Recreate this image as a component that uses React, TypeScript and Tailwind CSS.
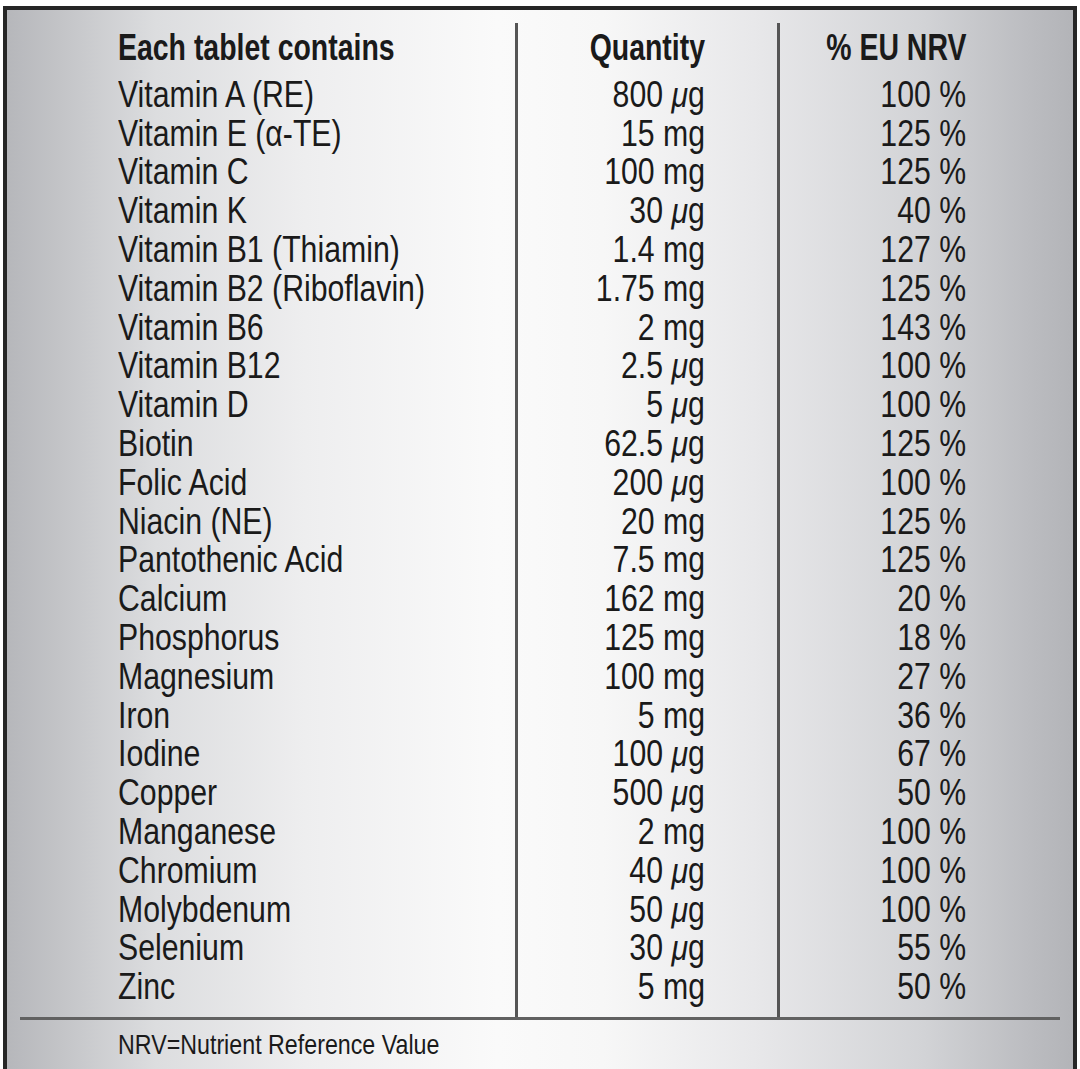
import React from "react";

type Row = { name: React.ReactNode; qty: React.ReactNode; nrv: string };

const mu = (n: string) => (
  <>
    {n} <span className="italic">μ</span>g
  </>
);

const rows: Row[] = [
  { name: "Vitamin A (RE)", qty: mu("800"), nrv: "100 %" },
  { name: "Vitamin E (α-TE)", qty: "15 mg", nrv: "125 %" },
  { name: "Vitamin C", qty: "100 mg", nrv: "125 %" },
  { name: "Vitamin K", qty: mu("30"), nrv: "40 %" },
  { name: "Vitamin B1 (Thiamin)", qty: "1.4 mg", nrv: "127 %" },
  { name: "Vitamin B2 (Riboflavin)", qty: "1.75 mg", nrv: "125 %" },
  { name: "Vitamin B6", qty: "2 mg", nrv: "143 %" },
  { name: "Vitamin B12", qty: mu("2.5"), nrv: "100 %" },
  { name: "Vitamin D", qty: mu("5"), nrv: "100 %" },
  { name: "Biotin", qty: mu("62.5"), nrv: "125 %" },
  { name: "Folic Acid", qty: mu("200"), nrv: "100 %" },
  { name: "Niacin (NE)", qty: "20 mg", nrv: "125 %" },
  { name: "Pantothenic Acid", qty: "7.5 mg", nrv: "125 %" },
  { name: "Calcium", qty: "162 mg", nrv: "20 %" },
  { name: "Phosphorus", qty: "125 mg", nrv: "18 %" },
  { name: "Magnesium", qty: "100 mg", nrv: "27 %" },
  { name: "Iron", qty: "5 mg", nrv: "36 %" },
  { name: "Iodine", qty: mu("100"), nrv: "67 %" },
  { name: "Copper", qty: mu("500"), nrv: "50 %" },
  { name: "Manganese", qty: "2 mg", nrv: "100 %" },
  { name: "Chromium", qty: mu("40"), nrv: "100 %" },
  { name: "Molybdenum", qty: mu("50"), nrv: "100 %" },
  { name: "Selenium", qty: mu("30"), nrv: "55 %" },
  { name: "Zinc", qty: "5 mg", nrv: "50 %" },
];

function Line({
  children,
  right,
}: {
  children: React.ReactNode;
  right?: boolean;
}) {
  return (
    <div className={`h-[38.8px] leading-[38.8px] whitespace-nowrap ${right ? "text-right" : "text-left"}`}>
      <span className={`inline-block scale-x-[0.84] ${right ? "origin-right" : "origin-left"}`}>
        {children}
      </span>
    </div>
  );
}

function Head({
  children,
  right,
}: {
  children: React.ReactNode;
  right?: boolean;
}) {
  return (
    <div className={`h-[38.8px] leading-[38.8px] mb-[8px] whitespace-nowrap font-bold ${right ? "text-right" : "text-left"}`}>
      <span className={`inline-block scale-x-[0.79] ${right ? "origin-right" : "origin-left"}`}>
        {children}
      </span>
    </div>
  );
}

export default function App() {
  return (
    <div className="w-[1080px] h-[1069px] overflow-hidden bg-white pt-[6px] pl-[3px]">
      <div className="w-[1074px] h-[1080px] border-t-4 border-l-4 border-r-4 border-[#262626] bg-[linear-gradient(to_right,#b6b7bb_0%,#c3c4c7_5%,#dcdddf_14%,#eeeeef_28%,#fafafa_46%,#f7f7f7_56%,#e8e8ea_70%,#d2d3d6_86%,#bbbcc0_96%,#b3b4b8_100%)] font-['Liberation_Sans',Arial,sans-serif] text-[36px] text-[#1a1a1a]">
        <div className="mx-[13px] mt-[13px] flex h-[997px] border-b-[3px] border-[#616161]">
          <div className="w-[498px] border-r-[3px] border-[#555] pl-[98px] pt-[6px]">
            <Head>Each tablet contains</Head>
            {rows.map((r, i) => (
              <Line key={i}>{r.name}</Line>
            ))}
          </div>
          <div className="w-[262px] border-r-[3px] border-[#555] pr-[72px] pt-[6px]">
            <Head right>Quantity</Head>
            {rows.map((r, i) => (
              <Line key={i} right>
                {r.qty}
              </Line>
            ))}
          </div>
          <div className="flex-1 pr-[94px] pt-[6px]">
            <Head right>% EU NRV</Head>
            {rows.map((r, i) => (
              <Line key={i} right>
                {r.nrv}
              </Line>
            ))}
          </div>
        </div>
        <div className="mt-[9px] pl-[111px] text-[28px] leading-[32px] whitespace-nowrap">
          <span className="inline-block origin-left scale-x-[0.83]">NRV=Nutrient Reference Value</span>
        </div>
      </div>
    </div>
  );
}
